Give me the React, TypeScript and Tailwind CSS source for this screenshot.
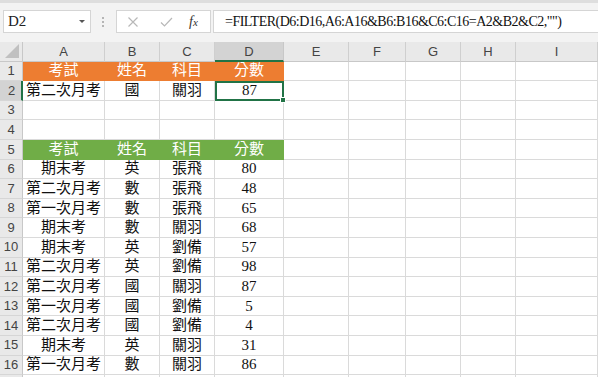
import React from "react";

const cols = ["A", "B", "C", "D", "E", "F", "G", "H", "I"];
const head = ["考試", "姓名", "科目", "分數"];

type Row = { n: number; cells?: string[]; fill?: "orange" | "green" };

const rows: Row[] = [
  { n: 1, cells: head, fill: "orange" },
  { n: 2, cells: ["第二次月考", "國", "關羽", "87"] },
  { n: 3 },
  { n: 4 },
  { n: 5, cells: head, fill: "green" },
  { n: 6, cells: ["期末考", "英", "張飛", "80"] },
  { n: 7, cells: ["第二次月考", "數", "張飛", "48"] },
  { n: 8, cells: ["第一次月考", "數", "張飛", "65"] },
  { n: 9, cells: ["期末考", "數", "關羽", "68"] },
  { n: 10, cells: ["期末考", "英", "劉備", "57"] },
  { n: 11, cells: ["第二次月考", "英", "劉備", "98"] },
  { n: 12, cells: ["第二次月考", "國", "關羽", "87"] },
  { n: 13, cells: ["第一次月考", "國", "劉備", "5"] },
  { n: 14, cells: ["第二次月考", "國", "劉備", "4"] },
  { n: 15, cells: ["期末考", "英", "關羽", "31"] },
  { n: 16, cells: ["第一次月考", "數", "關羽", "86"] },
  { n: 17 },
];

const serif = { fontFamily: '"Liberation Serif", "Noto Sans CJK TC", serif' };
const ui = { fontFamily: '"Liberation Sans", Arial, sans-serif' };

function Toolbar() {
  return (
    <div className="flex h-[42px] items-start border-t-[3px] border-[#dedede] bg-[#f3f3f3] pt-[7px]">
      <div className="ml-[3px] flex h-[23px] w-[88px] shrink-0 items-center justify-between border border-[#d5d5d5] bg-white pl-[4px] pr-[5px]">
        <span className="text-[15px] text-[#222]" style={serif}>D2</span>
        <span className="h-0 w-0 border-x-[3px] border-t-[3px] border-x-transparent border-t-[#555]" />
      </div>
      <div className="ml-[11px] mr-[12px] mt-[7px] flex shrink-0 flex-col gap-[2px]">
        <span className="h-[2px] w-[2px] bg-[#b5b5b5]" />
        <span className="h-[2px] w-[2px] bg-[#b5b5b5]" />
        <span className="h-[2px] w-[2px] bg-[#b5b5b5]" />
      </div>
      <div className="flex h-[23px] w-[95px] shrink-0 items-center border border-[#d5d5d5] bg-white pl-[9px]">
        <svg width="12" height="12" viewBox="0 0 12 12" className="ml-[1px]">
          <path d="M1.5 1.5 10.5 10.5M10.5 1.5 1.5 10.5" stroke="#b8b8b8" strokeWidth="1.2" fill="none" />
        </svg>
        <svg width="13" height="12" viewBox="0 0 13 12" className="ml-[21px]">
          <path d="M1 6.5 4.5 10 12 2" stroke="#b8b8b8" strokeWidth="1.2" fill="none" />
        </svg>
        <span className="ml-[16px] text-[14px] italic text-[#333]" style={serif}>
          f<span className="text-[11px]">x</span>
        </span>
      </div>
      <div className="ml-[2px] flex h-[23px] min-w-0 flex-1 items-center overflow-hidden border border-r-0 border-[#d5d5d5] bg-white pl-[11px]">
        <span className="whitespace-nowrap text-[14px] tracking-[-0.5px] text-[#111]" style={serif}>
          =FILTER(D6:D16,A6:A16&amp;B6:B16&amp;C6:C16=A2&amp;B2&amp;C2,"")
        </span>
      </div>
    </div>
  );
}

function Corner() {
  return (
    <div className="relative h-[19.6px] border-b border-r border-[#c8c8c8] bg-[#e9e9e9]">
      <svg width="14" height="14" viewBox="0 0 14 14" className="absolute bottom-[3px] right-[3px]">
        <path d="M14 0 14 14 0 14Z" fill="#c0c0c0" />
      </svg>
    </div>
  );
}

export default function App() {
  return (
    <div className="h-[377px] w-[598px] overflow-hidden bg-white">
      <Toolbar />
      <div className="grid grid-cols-[23px_82px_55px_55px_69px_65px_57px_55px_55px_82px] auto-rows-[19.6px]">
        <Corner />
        {cols.map((c) => (
          <div
            key={c}
            className={`flex items-center justify-center border-r text-[13px] text-[#444] ${
              c === "D"
                ? "border-b-2 border-b-[#217346] border-r-[#c8c8c8] bg-[#d3d3d3] pt-[2px]"
                : "border-b border-b-[#c8c8c8] border-r-[#cfcfcf] bg-[#e9e9e9]"
            }`}
            style={ui}
          >
            {c}
          </div>
        ))}
        {rows.map((r) => (
          <React.Fragment key={r.n}>
            <div
              className={`flex items-center justify-center border-b border-b-[#d6d6d6] text-[13px] text-[#444] ${
                r.n === 2
                  ? "border-r-2 border-r-[#217346] bg-[#d3d3d3] pl-[2px]"
                  : "border-r border-r-[#c8c8c8] bg-[#e9e9e9]"
              }`}
              style={ui}
            >
              {r.n < 17 ? r.n : ""}
            </div>
            {cols.map((c, i) => {
              const text = r.cells && i < 4 ? r.cells[i] : "";
              const filled = r.fill && i < 4;
              const sel = r.n === 2 && c === "D";
              let cls = "border-b border-r border-[#dadada] text-[#111]";
              if (filled && r.fill === "orange") cls = "border-b border-r border-[#ed7d31] bg-[#ed7d31] text-white";
              if (filled && r.fill === "green") cls = "border-b border-r border-[#70ad47] bg-[#70ad47] text-white";
              if (sel) cls = "relative border-2 border-[#217346] text-[#111]";
              return (
                <div
                  key={c}
                  className={`flex items-center justify-center whitespace-nowrap text-[15px] leading-none ${cls}`}
                  style={serif}
                >
                  {text}
                  {sel && (
                    <span className="absolute -bottom-[4px] -right-[4px] h-[6px] w-[6px] border border-white bg-[#217346]" />
                  )}
                </div>
              );
            })}
          </React.Fragment>
        ))}
      </div>
    </div>
  );
}
